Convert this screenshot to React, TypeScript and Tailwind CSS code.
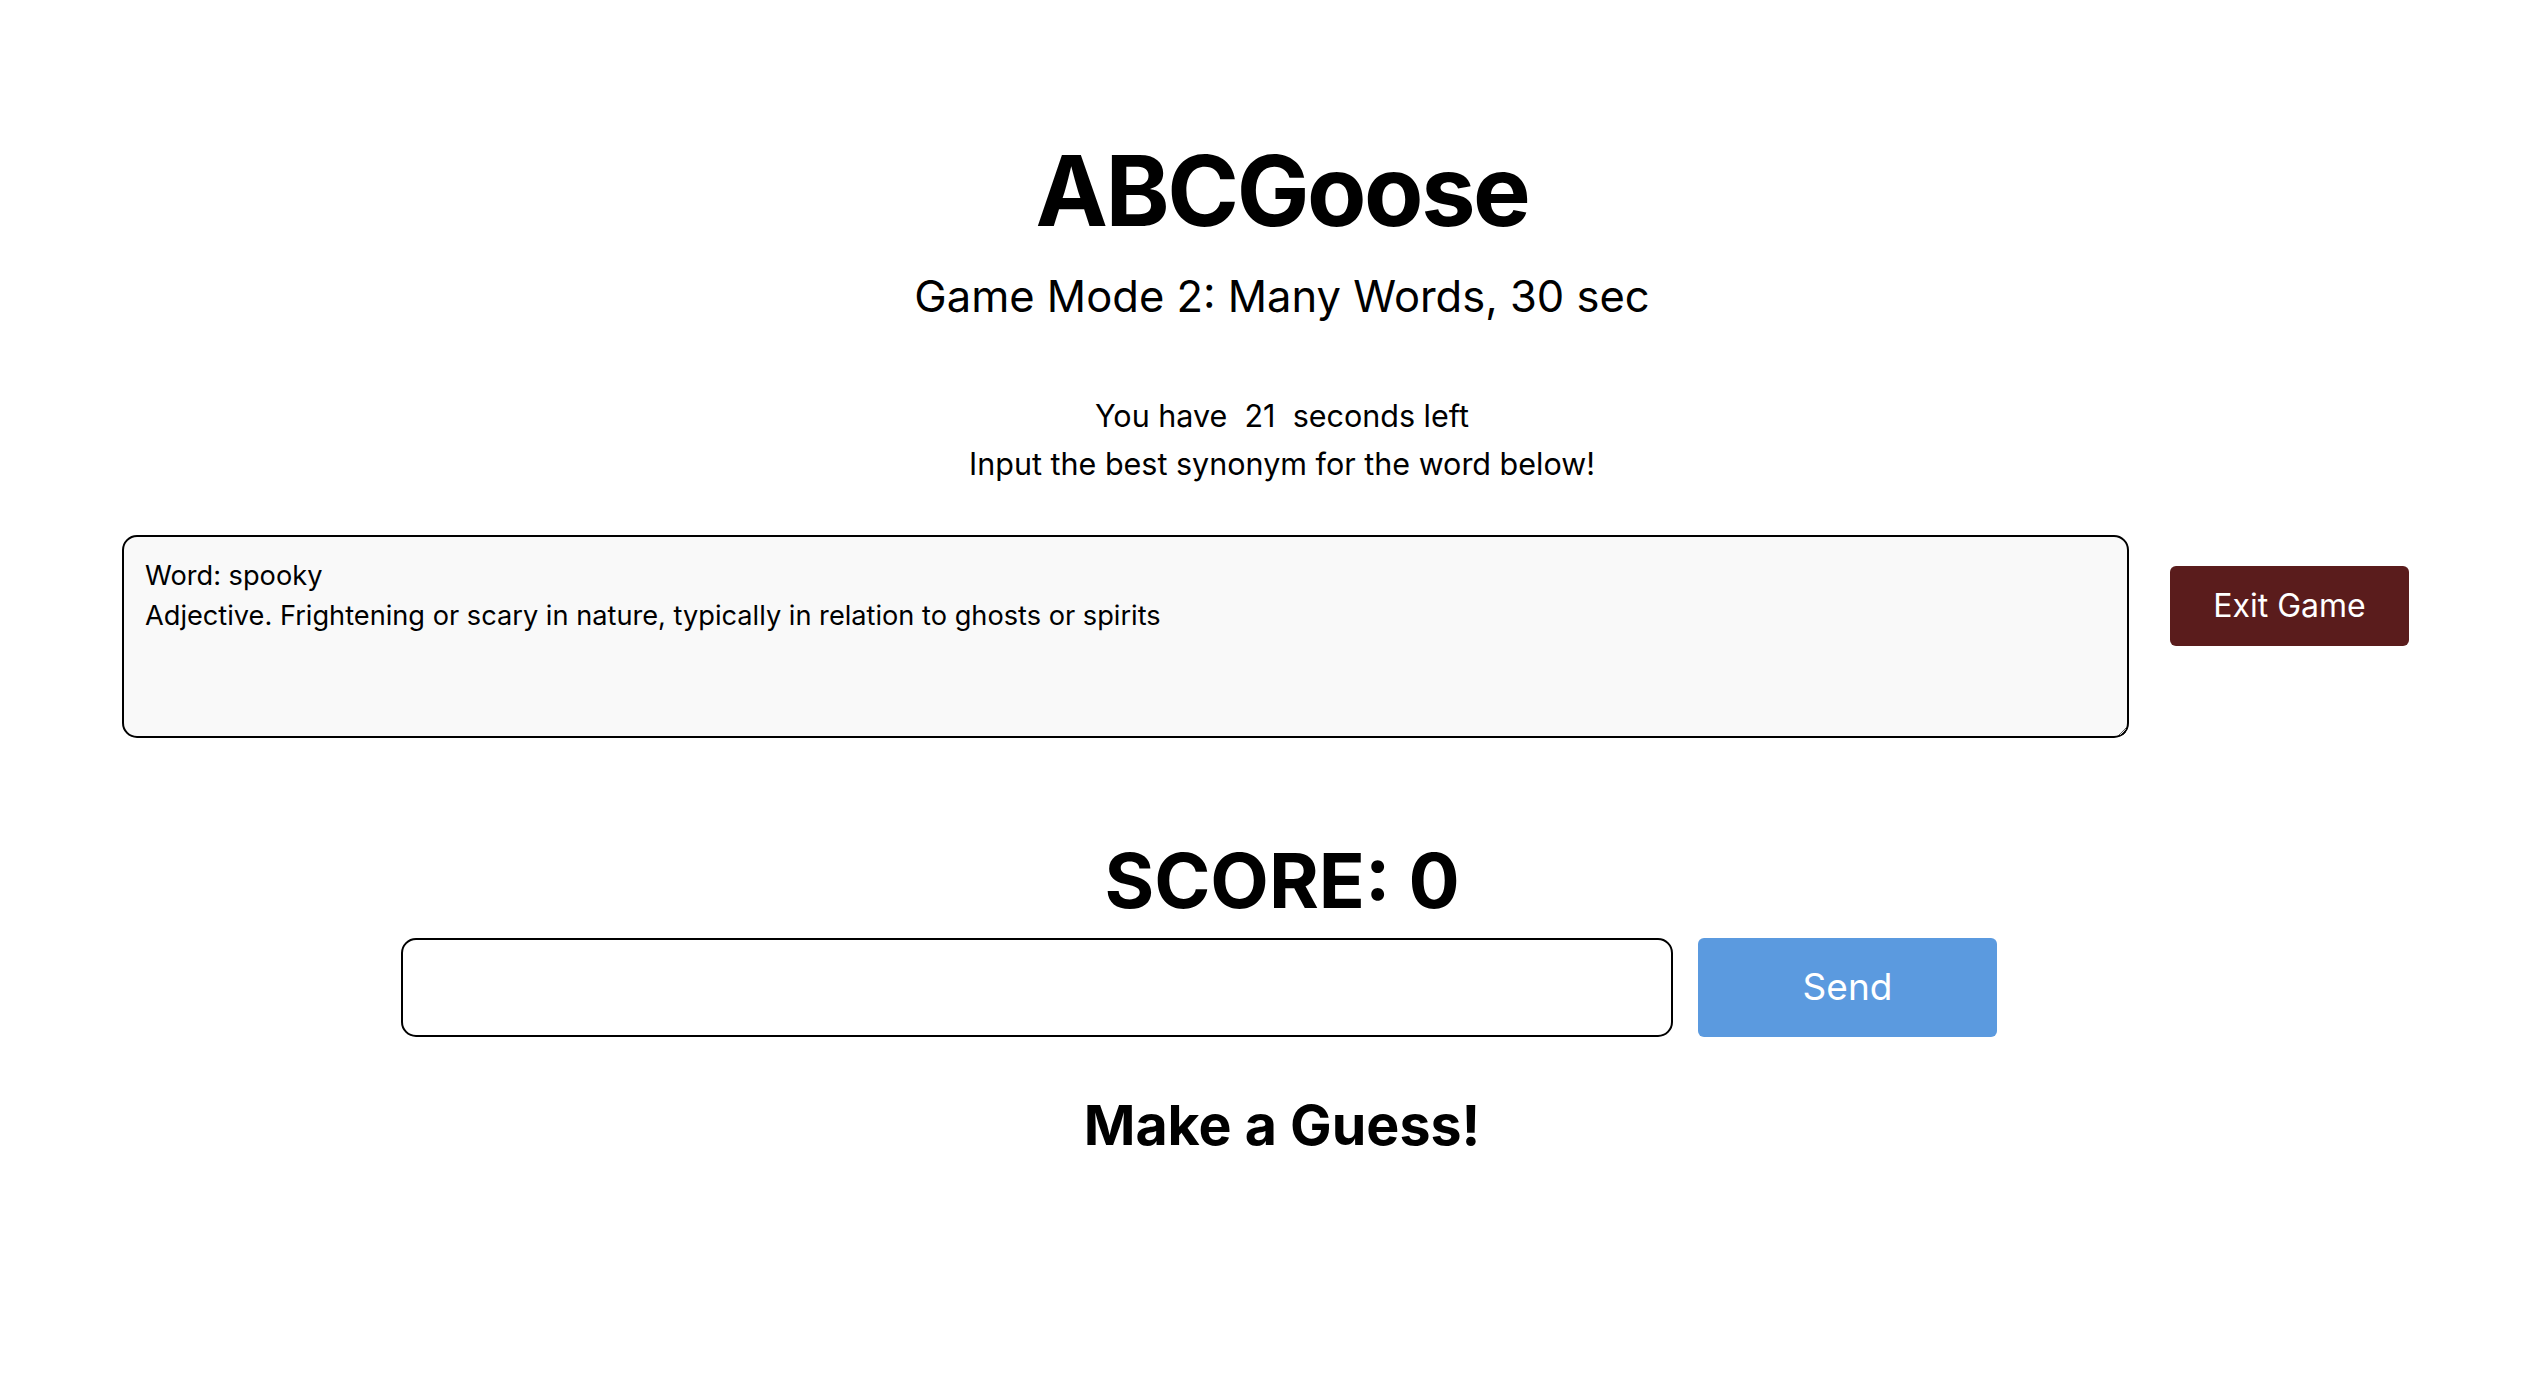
import { useState } from "react";

const font = { fontFamily: "Inter, 'Noto Sans', sans-serif" };

export default function App() {
  const [guess, setGuess] = useState("");
  const seconds = 21;
  const score = 0;

  return (
    <div className="min-h-screen bg-white text-black pl-[18px]" style={font}>
      <div className="flex flex-col items-center text-center">
        <h1 className="mt-[142px] text-[97px] font-bold leading-none tracking-tight">
          ABCGoose
        </h1>
        <h2 className="mt-[36px] text-[43.5px] leading-none">
          Game Mode 2: Many Words, 30 sec
        </h2>
        <div className="mt-[73px] text-[30.5px] leading-[48px]">
          <p>You have &nbsp;{seconds}&nbsp; seconds left</p>
          <p>Input the best synonym for the word below!</p>
        </div>
      </div>

      <div className="mt-[47px] flex items-start pl-[104px]">
        <textarea
          readOnly
          className="h-[203px] w-[2007px] resize rounded-[15px] border-2 border-black bg-[#f9f9f9] px-[21px] pt-[19px] text-[27.2px] leading-[40px] outline-none"
          defaultValue={
            "Word: spooky\nAdjective. Frightening or scary in nature, typically in relation to ghosts or spirits"
          }
        />
        <button className="ml-[41px] mt-[31px] h-[80px] w-[239px] rounded-[6px] bg-[#5a1c1c] text-[32px] text-white">
          Exit Game
        </button>
      </div>

      <div className="flex flex-col items-center">
        <h2 className="mt-[104px] text-[76px] font-bold leading-none">
          SCORE: {score}
        </h2>
      </div>

      <div className="mt-[20px] flex pl-[383px]">
        <input
          value={guess}
          onChange={(e) => setGuess(e.target.value)}
          className="h-[99px] w-[1272px] rounded-[15px] border-2 border-black px-4 text-[32px] outline-none"
        />
        <button className="ml-[25px] h-[99px] w-[299px] rounded-[6px] bg-[#5b9adf] text-[37px] text-white">
          Send
        </button>
      </div>

      <div className="flex flex-col items-center">
        <h3 className="mt-[60px] text-[55.5px] font-bold leading-none">
          Make a Guess!
        </h3>
      </div>
    </div>
  );
}
